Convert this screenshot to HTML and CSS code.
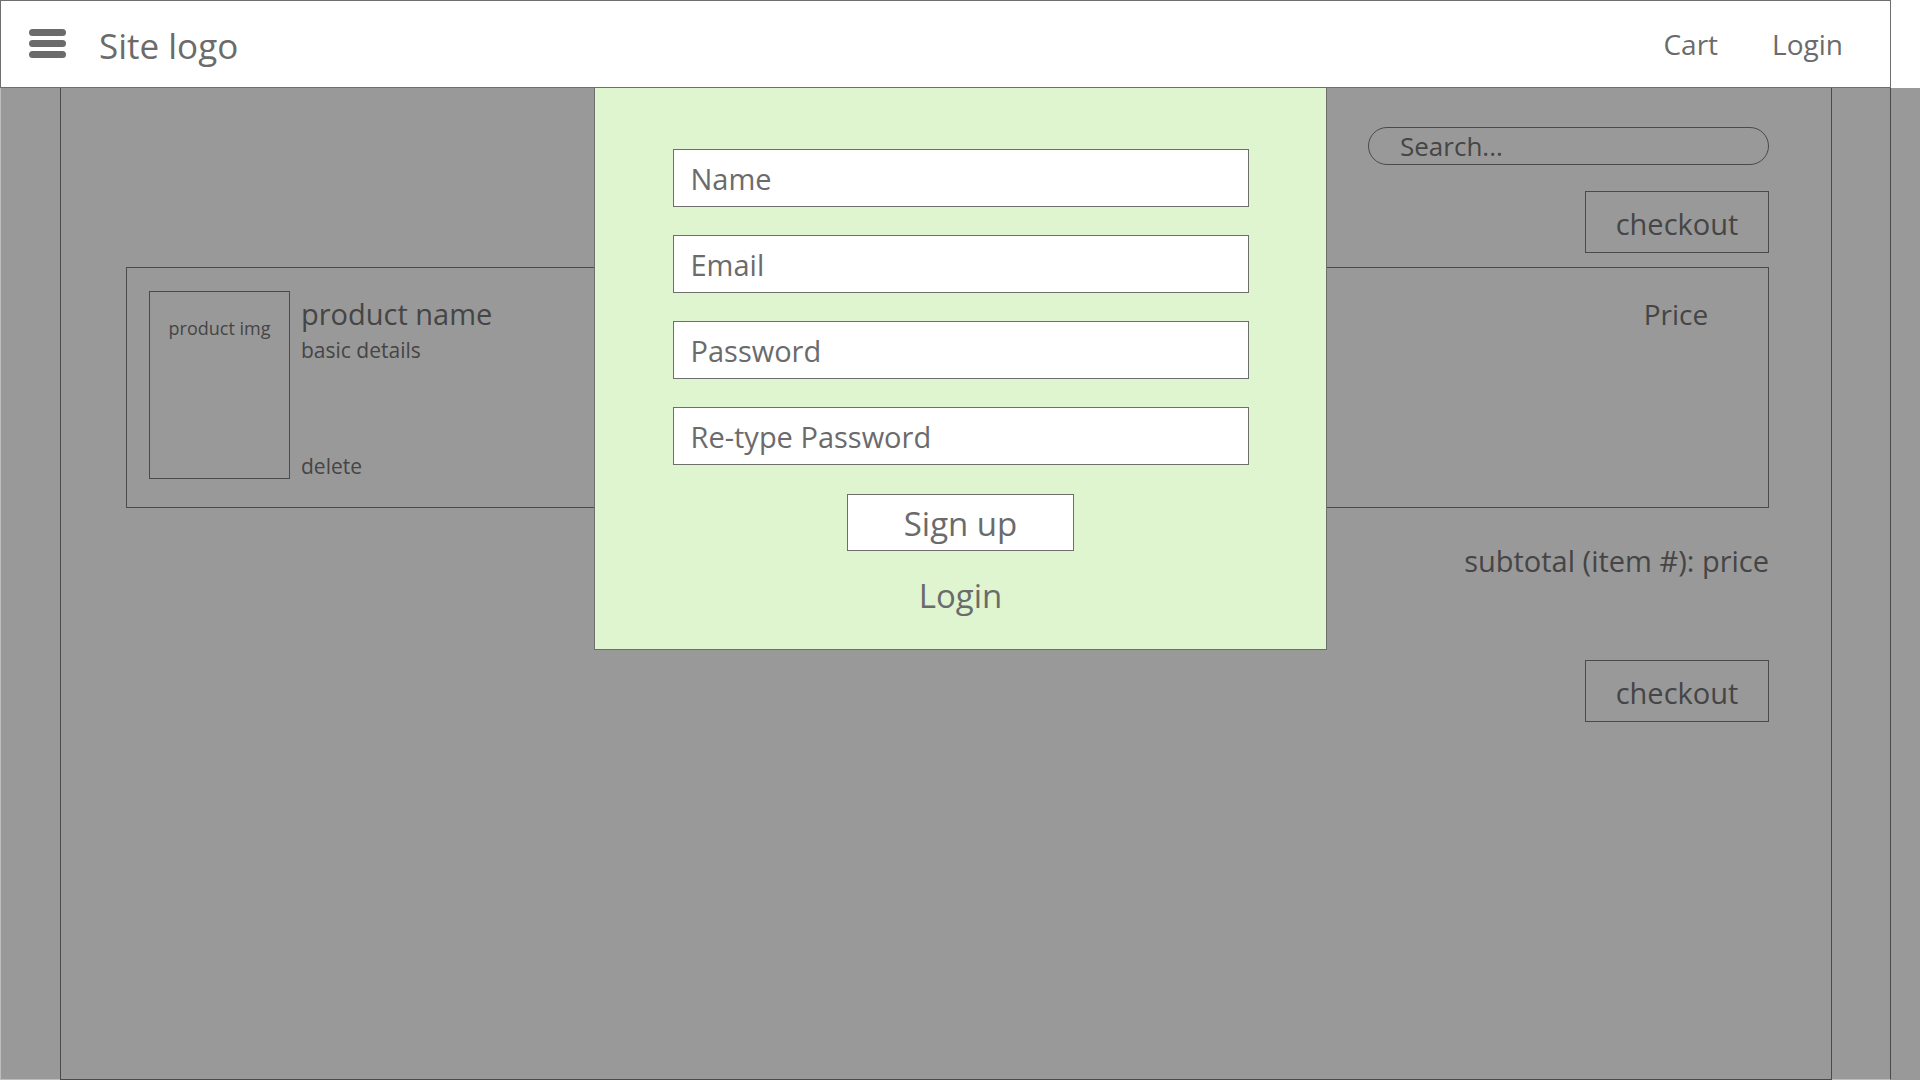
FILE: index.html
```html
<!DOCTYPE html>
<html lang="en">
<head>
<meta charset="utf-8">
<title>Cart - Sign up</title>
<link rel="stylesheet" href="styles.css">
</head>
<body>
  <div class="topbar">
    <header class="header">
      <div class="burger"><span></span><span></span><span></span></div>
      <div class="logo">Site logo</div>
      <nav class="nav">
        <span class="nav-link">Cart</span>
        <span class="nav-link">Login</span>
      </nav>
    </header>
    <div class="strip"></div>
  </div>
  <div class="body-row">
    <div class="gutter-left"></div>
    <main class="container">
      <div class="search">Search...</div>
      <div class="btn checkout-top">checkout</div>
      <section class="card">
        <div class="img-box">product img</div>
        <div class="info">
          <div class="pname">product name</div>
          <div class="details">basic details</div>
          <div class="delete">delete</div>
        </div>
        <div class="price-col">
          <div class="price">Price</div>
        </div>
      </section>
      <div class="subtotal">subtotal (item #): price</div>
      <div class="btn checkout-bottom">checkout</div>
    </main>
    <div class="gutter-right"></div>
    <div class="strip-gray"></div>
  </div>

  <div class="modal">
    <div class="field">Name</div>
    <div class="field">Email</div>
    <div class="field">Password</div>
    <div class="field">Re-type Password</div>
    <div class="signup">Sign up</div>
    <div class="login-link">Login</div>
  </div>
</body>
</html>
```
FILE: styles.css
```css
* { box-sizing: border-box; }

body {
  margin: 0;
  width: 1920px;
  height: 1080px;
  overflow: hidden;
  background: #999999;
  font-family: "Open Sans", "Noto Sans", sans-serif;
  position: relative;
}

.topbar {
  display: flex;
  height: 88px;
  background: #ffffff;
}

.header {
  width: 1891px;
  height: 88px;
  border: 1px solid #6e6e6e;
  display: flex;
  align-items: center;
  padding: 0 47px 0 28px;
  color: #6b6b6b;
}

.strip { flex: 1; background: #fff; }

.burger {
  display: flex;
  flex-direction: column;
  gap: 4px;
  width: 37px;
  margin-top: -2px;
}
.burger span {
  display: block;
  height: 7px;
  border-radius: 4px;
  background: #6b6b6b;
}

.logo {
  margin-left: 33px;
  font-size: 35px;
  line-height: 44px;
  margin-top: 4px;
}

.nav {
  margin-left: auto;
  display: flex;
  gap: 54px;
  margin-top: 0;
}
.nav-link {
  font-size: 28px;
  line-height: 38px;
}

.body-row {
  display: flex;
  height: 992px;
}

.gutter-left {
  width: 60px;
  border-left: 1px solid #bdbdbd;
  border-bottom: 1px solid #bdbdbd;
}

.container {
  width: 1772px;
  border-left: 1px solid #4a4a4a;
  border-right: 1px solid #4a4a4a;
  border-bottom: 1px solid #4a4a4a;
  padding: 39px 62px 0 65px;
  display: flex;
  flex-direction: column;
  align-items: flex-end;
  color: #454545;
}

.gutter-right {
  width: 59px;
  border-right: 1px solid #4a4a4a;
  border-bottom: 1px solid #bdbdbd;
}

.strip-gray { flex: 1; }

.search {
  width: 401px;
  height: 38px;
  border: 1px solid #4a4a4a;
  border-radius: 19px;
  padding-left: 31px;
  font-size: 26px;
  line-height: 36px;
  align-self: flex-end;
}

.btn {
  width: 184px;
  height: 62px;
  border: 1px solid #4a4a4a;
  display: flex;
  align-items: center;
  justify-content: center;
  font-size: 29px;
  padding-top: 3px;
}

.checkout-top { margin-top: 26px; }

.card {
  margin-top: 14px;
  width: 100%;
  height: 241px;
  border: 1px solid #4a4a4a;
  display: flex;
  padding: 23px 0 28px 22px;
}

.img-box {
  width: 141px;
  height: 188px;
  border: 1px solid #4a4a4a;
  text-align: center;
  font-size: 18px;
  line-height: 24px;
  padding-top: 24px;
}

.info {
  margin-left: 11px;
  display: flex;
  flex-direction: column;
  height: 188px;
}
.pname {
  font-size: 29px;
  line-height: 36px;
  margin-top: 5px;
}
.details {
  font-size: 21px;
  line-height: 28px;
  margin-top: 4px;
}
.delete {
  margin-top: auto;
  font-size: 21px;
  line-height: 28px;
  margin-bottom: -1px;
}

.price-col {
  margin-left: auto;
  width: 184px;
  display: flex;
  justify-content: center;
}
.price {
  font-size: 28px;
  line-height: 36px;
  margin-top: 5px;
}

.subtotal {
  margin-top: 34px;
  font-size: 29px;
  line-height: 38px;
}

.checkout-bottom { margin-top: 80px; }

.modal {
  position: absolute;
  left: 594px;
  top: 87px;
  width: 733px;
  height: 563px;
  background: #dff5d0;
  border: 1px solid #6e6e6e;
  padding-top: 61px;
  display: flex;
  flex-direction: column;
  align-items: center;
  gap: 28px;
  color: #6b6b6b;
}

.field {
  width: 576px;
  height: 58px;
  background: #ffffff;
  border: 1px solid #6e6e6e;
  padding-left: 17px;
  font-size: 29px;
  line-height: 58px;
}

.signup {
  margin-top: 1px;
  height: 57px;
  width: 227px;
  background: #ffffff;
  border: 1px solid #6e6e6e;
  text-align: center;
  font-size: 33px;
  line-height: 58px;
}

.login-link {
  margin-top: -5px;
  font-size: 33px;
  line-height: 44px;
}
```
